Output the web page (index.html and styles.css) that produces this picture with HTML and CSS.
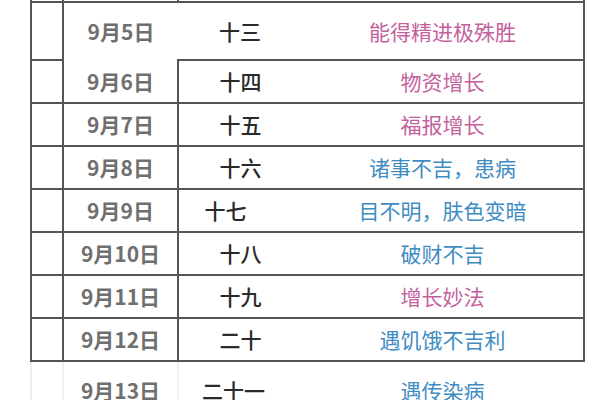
FILE: index.html
```html
<!DOCTYPE html>
<html lang="zh">
<head>
<meta charset="utf-8">
<link rel="stylesheet" href="styles.css">
</head>
<body>
<table class="almanac">
  <colgroup>
    <col class="c-blank">
    <col class="c-date">
    <col class="c-lunar">
    <col class="c-desc">
  </colgroup>
  <tbody>
    <tr class="r-top"><td></td><td></td><td class="lunar"></td><td class="desc"></td></tr>
    <tr class="r-first">
      <td></td>
      <td class="date date-open">9月5日</td>
      <td class="lunar lunar-open">十三</td>
      <td class="desc pink">能得精进极殊胜</td>
    </tr>
    <tr><td></td><td class="date date-open-top">9月6日</td><td class="lunar">十四</td><td class="desc pink">物资增长</td></tr>
    <tr><td></td><td class="date">9月7日</td><td class="lunar">十五</td><td class="desc pink">福报增长</td></tr>
    <tr><td></td><td class="date">9月8日</td><td class="lunar">十六</td><td class="desc blue">诸事不吉，患病</td></tr>
    <tr><td></td><td class="date">9月9日</td><td class="lunar shift">十七</td><td class="desc blue">目不明，肤色变暗</td></tr>
    <tr><td></td><td class="date">9月10日</td><td class="lunar">十八</td><td class="desc blue">破财不吉</td></tr>
    <tr><td></td><td class="date">9月11日</td><td class="lunar">十九</td><td class="desc pink">增长妙法</td></tr>
    <tr><td></td><td class="date">9月12日</td><td class="lunar">二十</td><td class="desc blue">遇饥饿不吉利</td></tr>
    <tr class="r-faint"><td></td><td class="date">9月13日</td><td class="lunar shift-s">二十一</td><td class="desc blue">遇传染病</td></tr>
  </tbody>
</table>
</body>
</html>
```

FILE: styles.css
```css
html, body {
  margin: 0;
  padding: 0;
  background: #ffffff;
}

body {
  font-family: "Noto Sans CJK SC", "Noto Sans", sans-serif;
  overflow: hidden;
}

.almanac {
  border-collapse: collapse;
  table-layout: fixed;
  width: 553px;
  margin-left: 30px;
}

.c-blank { width: 32px; }
.c-date { width: 115px; }
.c-lunar { width: 124px; }
.c-desc { width: 282px; }

.almanac td {
  border: 2px solid #555555;
  padding: 0;
  text-align: center;
  vertical-align: middle;
  font-size: 21px;
  line-height: 1;
  white-space: nowrap;
}

.almanac td.lunar { border-right: none; }
.almanac td.desc { border-left: none; }

.r-top td { height: 1px; border-top: none; }
.r-first td { height: 56px; }
.almanac tr td { height: 41px; }
.almanac tr.r-top td { height: 1px; }
.almanac tr.r-first td { height: 56px; }

.almanac td.date-open { border-right: hidden; border-bottom: hidden; }
.almanac td.lunar-open { border-left: hidden; }

.date {
  color: #6f6f6f;
  font-weight: 700;
  font-size: 20px;
}

.lunar {
  color: #2a2a2a;
  font-weight: 500;
  font-size: 22px;
}

.shift { padding-right: 30px !important; }
.shift-s { padding-right: 14px !important; }

.desc {
  font-size: 21px;
  font-weight: 400;
}

.pink { color: #c4619d; }
.blue { color: #3f8cc3; }

.almanac tr.r-faint td {
  height: 56px;
  border-bottom: none;
  border-left-color: #f1f1f1;
  border-right-color: #f1f1f1;
}
.almanac tr.r-faint td:first-child { border-left-color: #eeeeee; }
.almanac tr.r-faint td.desc { border-right: 2px solid #ffffff; }
```
